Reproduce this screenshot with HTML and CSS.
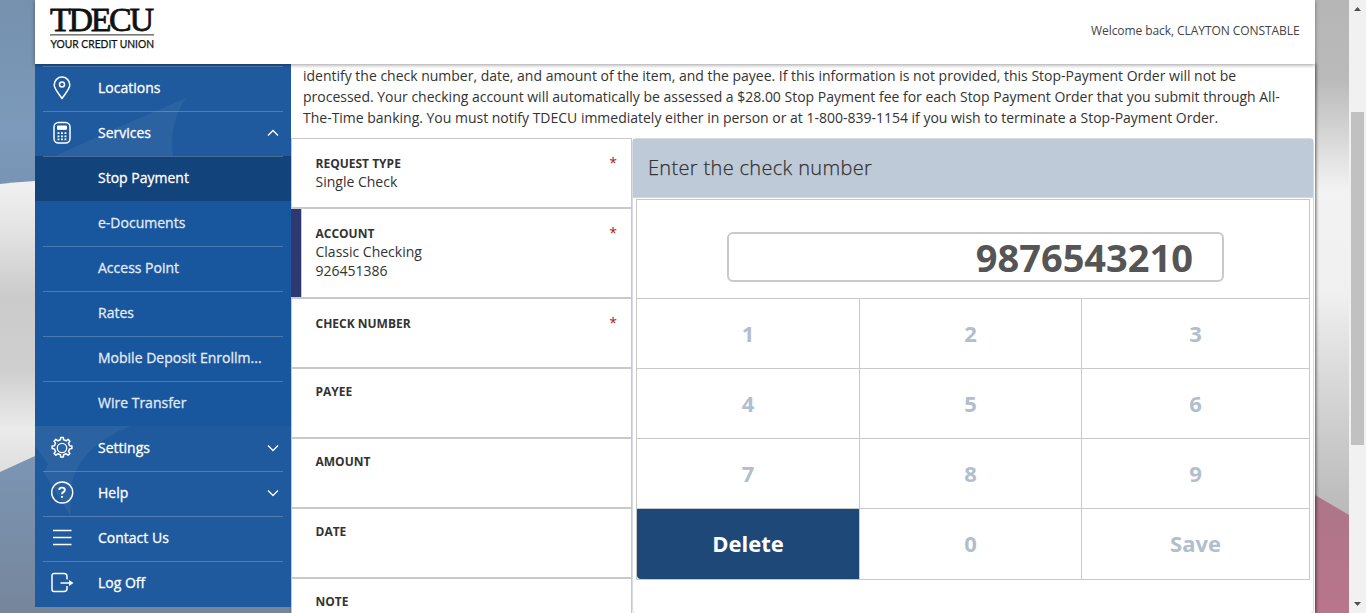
FILE: index.html
```html
<!DOCTYPE html>
<html lang="en">
<head>
<meta charset="utf-8">
<title>Stop Payment</title>
<link rel="stylesheet" href="styles.css">
</head>
<body>
<svg class="backdrop" width="1349" height="613" viewBox="0 0 1349 613" aria-hidden="true">
  <defs>
    <linearGradient id="sky" x1="0" y1="0" x2="0" y2="1"><stop offset="0" stop-color="#7591ae"/><stop offset=".7" stop-color="#7c9abb"/><stop offset="1" stop-color="#7893b3"/></linearGradient>
    <linearGradient id="cloth" x1="0" y1="0" x2="0" y2="1"><stop offset="0" stop-color="#f1f1f1"/><stop offset=".14" stop-color="#e6e6e6"/><stop offset=".4" stop-color="#cbcbcb"/><stop offset=".65" stop-color="#cfcfcf"/><stop offset=".85" stop-color="#ebebeb"/><stop offset="1" stop-color="#dedede"/></linearGradient>
    <linearGradient id="low" x1="0" y1="0" x2="0" y2="1"><stop offset="0" stop-color="#758ea9"/><stop offset=".35" stop-color="#7c98b8"/><stop offset="1" stop-color="#76869b"/></linearGradient>
    <linearGradient id="right" x1="0" y1="0" x2="0" y2="1"><stop offset="0" stop-color="#b6b6b6"/><stop offset=".15" stop-color="#bababa"/><stop offset=".27" stop-color="#dadada"/><stop offset=".36" stop-color="#f3f3f3"/><stop offset=".55" stop-color="#f0f0f0"/><stop offset=".72" stop-color="#d8d8d8"/><stop offset="1" stop-color="#b6b6b6"/></linearGradient>
    <linearGradient id="rose" x1="0" y1="0" x2="0" y2="1"><stop offset="0" stop-color="#ad7587"/><stop offset="1" stop-color="#b9758d"/></linearGradient>
  </defs>
  <rect width="300" height="190" fill="url(#sky)"/>
  <path d="M0 184 Q18 182 35 181 L300 181 L300 330 L35 457 L0 473Z" fill="url(#cloth)"/>
  <path d="M0 472 L35 456 L300 330 L300 613 L0 613Z" fill="url(#low)"/>
  <rect x="1300" width="49" height="530" fill="url(#right)"/>
  <path d="M1300 486 L1315 495 L1349 515 L1349 613 L1300 613Z" fill="url(#rose)"/>
</svg>

<div class="window">
  <div class="page">
    <header class="header">
      <svg class="logo" width="106" height="44" viewBox="0 0 106 44" role="img" aria-label="TDECU Your Credit Union">
        <text class="logo-name" x="0" y="24.500" textLength="104" lengthAdjust="spacing">TDECU</text>
        <rect x="0" y="28" width="104" height="1.6" fill="#777"/>
        <text class="logo-tag" x="0.5" y="41.500" textLength="103.5" lengthAdjust="spacingAndGlyphs">YOUR CREDIT UNION</text>
      </svg>
      <div class="welcome">Welcome back, CLAYTON CONSTABLE</div>
    </header>

    <div class="body">
      <nav class="sidebar">
        <div class="group group-top">
          <svg class="facets" width="256" height="92" viewBox="0 0 256 92"><path d="M20 92 Q85 62 151 34 Q134 58 138 92Z" fill="#fff" opacity=".05"/></svg>
          <a class="item"><svg class="icon" viewBox="0 0 24 24"><path d="M12 22.500C9 18 4.200 13 4.200 8.800a7.800 7.700 0 0 1 15.600 0C19.800 13 15 18 12 22.500Z"/><circle cx="12" cy="8.500" r="2.500"/></svg><span>Locations</span></a>
          <a class="item"><svg class="icon" viewBox="0 0 24 24"><rect x="4" y="1.500" width="16" height="20.500" rx="4.500"/><rect x="7.500" y="5" width="9" height="3.300" fill="currentColor" stroke-width="1"/><path d="M7.500 12.200h9.500M7.500 15.300h9.500M7.500 18.400h9.500" stroke-width="1.700" stroke-dasharray="1.900 1.600"/></svg><span>Services</span><svg class="chev" viewBox="0 0 12 8"><path d="M1 6.500 6 1.500 11 6.500"/></svg></a>
        </div>
        <div class="group group-sub">
          <a class="item active"><span>Stop Payment</span></a>
          <a class="item plain"><span>e-Documents</span></a>
          <a class="item"><span>Access Point</span></a>
          <a class="item"><span>Rates</span></a>
          <a class="item"><span>Mobile Deposit Enrollm...</span></a>
          <a class="item"><span>Wire Transfer</span></a>
        </div>
        <div class="group group-bottom">
          <svg class="facets" width="256" height="181" viewBox="0 0 256 181"><path d="M0 0H96Q50 18 39 50Q34 62 36 91L9 47L13 38L0 20Z" fill="#fff" opacity=".05"/></svg>
          <a class="item plain"><svg class="icon" viewBox="0 0 24 24"><circle cx="12" cy="12" r="4.700" stroke-width="1.300"/><path d="M10.400 3.800 10.700 1.500h2.600l.3 2.300 2.600 1 1.900-1.400 1.800 1.800-1.400 1.900 1.100 2.600 2.300.3v2.600l-2.300.3-1.100 2.600 1.400 1.900-1.800 1.800-1.900-1.400-2.600 1-.3 2.300h-2.600l-.3-2.300-2.600-1-1.900 1.400-1.800-1.800 1.400-1.900-1.100-2.600-2.300-.3V10l2.300-.3 1.100-2.600-1.400-1.900 1.800-1.800 1.900 1.400Z" stroke-width="1.500"/></svg><span>Settings</span><svg class="chev" viewBox="0 0 12 8"><path d="M1 1.500 6 6.500 11 1.500"/></svg></a>
          <a class="item"><svg class="icon" viewBox="0 0 24 24"><circle cx="12.200" cy="11.500" r="10.500" stroke-width="1.400"/><path d="M9.200 9Q9.200 6.600 12 6.600T14.800 8.900Q14.800 10.200 13.300 11.100Q12 12 12 13.300M12 14.900v1.800" stroke-width="1.900"/></svg><span>Help</span><svg class="chev" viewBox="0 0 12 8"><path d="M1 1.500 6 6.500 11 1.500"/></svg></a>
          <a class="item"><svg class="icon" viewBox="0 0 24 24"><path d="M3 4.500h18.500M3 11.500h18.500M3 18.500h18.500" stroke-width="1.400"/></svg><span>Contact Us</span></a>
          <a class="item"><svg class="icon" viewBox="0 0 24 24"><path d="M17 8.500V5.500a3 3 0 0 0-3-3H4a2 2 0 0 0-2 2v14a2 2 0 0 0 2 2H14a3 3 0 0 0 3-3V15M10.500 12H20"/><path d="M19 9 23.500 12 19 15Z" fill="currentColor" stroke="none"/></svg><span>Log Off</span></a>
        </div>
      </nav>

      <main class="content">
        <div class="notice">
          <div>identify the check number, date, and amount of the item, and the payee. If this information is not provided, this Stop-Payment Order will not be</div>
          <div>processed. Your checking account will automatically be assessed a $28.00 Stop Payment fee for each Stop Payment Order that you submit through All-</div>
          <div>The-Time banking. You must notify TDECU immediately either in person or at 1-800-839-1154 if you wish to terminate a Stop-Payment Order.</div>
        </div>
        <div class="form">
          <div class="fields">
            <div class="field"><b>REQUEST TYPE</b><span>Single Check</span><i>*</i></div>
            <div class="field selected"><b>ACCOUNT</b><span>Classic Checking</span><span>926451386</span><i>*</i></div>
            <div class="field"><b>CHECK NUMBER</b><i>*</i></div>
            <div class="field optional"><b>PAYEE</b></div>
            <div class="field optional"><b>AMOUNT</b></div>
            <div class="field optional"><b>DATE</b></div>
            <div class="field optional"><b>NOTE</b></div>
          </div>
          <section class="panel">
            <h2>Enter the check number</h2>
            <div class="keypad">
              <div class="display"><div class="entry">9876543210</div></div>
              <div class="keys">
                <div>1</div><div>2</div><div>3</div>
                <div>4</div><div>5</div><div>6</div>
                <div>7</div><div>8</div><div>9</div>
                <div class="delete">Delete</div><div>0</div><div>Save</div>
              </div>
            </div>
          </section>
        </div>
      </main>
    </div>
  </div>
  <div class="scrollbar">
    <svg width="17" height="17" viewBox="0 0 17 17"><path d="M5 11 8.500 7 12 11Z" fill="#505050"/></svg>
    <div class="thumb"></div>
    <svg class="down" width="17" height="17" viewBox="0 0 17 17"><path d="M5 6 8.500 10 12 6Z" fill="#505050"/></svg>
  </div>
</div>
</body>
</html>
```
FILE: styles.css
```css
* { box-sizing: border-box; }
body {
  margin: 0;
  height: 613px;
  overflow: hidden;
  font-family: "Open Sans", "Noto Sans", sans-serif;
  font-size: 14px;
  color: #333;
}
.backdrop { position: absolute; left: 0; top: 0; z-index: -1; }
.window { display: flex; justify-content: space-between; height: 613px; }
.page { width: 1280px; margin-left: 35px; height: 613px; display: flex; flex-direction: column; }

.header {
  position: relative;
  z-index: 2;
  flex: none;
  height: 64px;
  padding: 0 15px;
  display: flex;
  justify-content: space-between;
  background: #fff;
  box-shadow: 0 1px 4px rgba(0,0,0,.4);
}
.logo { margin-top: 6px; overflow: visible; }
.logo-name { font: 34px "Liberation Serif", serif; fill: #111; stroke: #111; stroke-width: .8px; }
.logo-tag { font: 400 11.5px Lato, sans-serif; fill: #111; stroke: #111; stroke-width: .25px; }
.welcome { padding: 22px .5px 0 0; font-size: 12px; line-height: 17px; letter-spacing: -.07px; color: #444; white-space: nowrap; }

.body { display: flex; flex: 1; min-height: 0; }
.sidebar { width: 256px; flex: none; height: 543px; }
.group { position: relative; }
.group-top { background: #205a9e; padding-top: 2px; }
.group-sub { background: #18569d; }
.group-bottom { background: #205a9e; padding-bottom: 1px; }
.facets { position: absolute; left: 0; top: 0; }
.item {
  position: relative;
  display: flex;
  align-items: center;
  height: 45px;
  padding: 0 0 2px 63px;
  color: #fff;
  white-space: nowrap;
}
.item span { -webkit-text-stroke: .3px currentColor; }
.item::before { content: ""; position: absolute; left: 8px; right: 8px; top: 0; height: 1px; background: rgba(255,255,255,.22); }
.item.plain::before { display: none; }
.group-sub .item { color: #e3eaf3; }
.group-sub .active { background: #12437b; color: #fff; }
.icon { width: 24px; height: 24px; margin: 0 24px 0 -48px; fill: none; stroke: currentColor; stroke-width: 1.5; stroke-linejoin: round; }
.chev { width: 12px; height: 8px; margin: 0 12px 0 auto; fill: none; stroke: #fff; stroke-width: 1.3; }

.content { width: 1024px; background: #fff; box-shadow: 1px 0 3px rgba(0,0,0,.6); }
.notice { height: 74px; padding: 1px 0 0 12px; line-height: 21px; letter-spacing: -.008px; white-space: nowrap; }
.form { display: flex; height: 475px; overflow: hidden; }
.fields { width: 341px; flex: none; }
.field {
  position: relative;
  height: 70px;
  padding: 15px 0 0 23.5px;
  border: 1px solid #c9c9c9;
  display: flex;
  flex-direction: column;
  line-height: 19px;
}
.field b { font-size: 12px; line-height: 18px; padding-top: 1px; margin-bottom: -1px; }
.field i { position: absolute; right: 14px; top: 14px; font-style: normal; color: #a61c1c; }
.field.optional { padding-top: 13px; }
.field.selected {
  height: 90px;
  padding-left: 24.5px;
  border-left: 0;
  background: linear-gradient(90deg, #2e3871 10px, #c9c9c9 10px, #c9c9c9 11px, #fff 11px) border-box;
}

.panel { width: 682px; height: 476px; border: 1px solid #d7dade; border-radius: 4px; }
.panel h2 { margin: 0; height: 59px; padding: 0 15px; font-size: 20px; font-weight: 300; letter-spacing: .33px; line-height: 57px; -webkit-text-stroke: .25px #333; background: #bfcad8; border-bottom: 1px solid #d2d8df; }
.keypad { width: 674px; margin: 1px 0 0 3px; border: 1px solid #c9c9c9; }
.display { height: 99px; padding-top: 32px; border-bottom: 1px solid #c9c9c9; }
.entry {
  width: 497px;
  height: 50px;
  margin-left: 90px;
  padding-right: 29px;
  border: 2px solid #c9c9c9;
  border-radius: 6px;
  text-align: right;
  font-weight: 700;
  font-size: 38px;
  line-height: 47px;
  color: #555;
}
.keys { display: grid; grid-template-columns: 223px 222px 227px; grid-template-rows: 70px 70px 70px 70px; }
.keys div {
  display: flex;
  align-items: center;
  justify-content: center;
  padding-bottom: 2px;
  font-size: 22px;
  font-weight: 700;
  color: #b0becd;
  border-right: 1px solid #c9c9c9;
  border-bottom: 1px solid #c9c9c9;
}
.keys div:nth-child(3n) { border-right: 0; }
.keys div:nth-child(n+10) { border-bottom: 0; }
.keys .delete { background: #1e4878; color: #fff; border-bottom-left-radius: 4px; }

.scrollbar { width: 17px; height: 613px; background: #f1f1f1; display: flex; flex-direction: column; }
.scrollbar svg { flex: none; }
.thumb { width: 13px; height: 333px; margin: 95px 0 0 2px; background: #c1c1c1; }
.down { margin-top: auto; }
```
